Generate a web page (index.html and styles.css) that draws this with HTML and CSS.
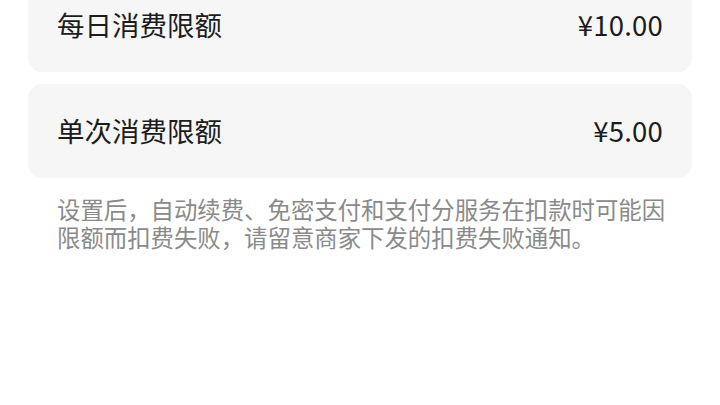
FILE: index.html
```html
<!DOCTYPE html>
<html lang="zh-CN">
<head>
    <meta charset="UTF-8">
    <meta name="viewport" content="width=device-width, initial-scale=1.0">
    <title>消费限额</title>
    <link rel="stylesheet" href="styles.css">
</head>
<body>

    <div class="limit-list">
        <div class="limit-card">
            <span class="limit-label">每日消费限额</span>
            <span class="limit-amount">¥10.00</span>
        </div>
        <div class="limit-card">
            <span class="limit-label">单次消费限额</span>
            <span class="limit-amount">¥5.00</span>
        </div>
        <p class="limit-note">设置后，自动续费、免密支付和支付分服务在扣款时可能因限额而扣费失败，请留意商家下发的扣费失败通知。</p>
    </div>

</body>
</html>
```

FILE: styles.css
```css
body {
    font-family: "Noto Sans CJK SC", "Noto Sans", sans-serif;
    margin: 0;
    padding: 0;
    background-color: #ffffff;
    color: #1c1c1c;
}

.limit-list {
    display: flex;
    flex-direction: column;
    gap: 12px;
    padding: 0 28px;
    margin-top: -22px;
}

.limit-card {
    background-color: #f6f6f6;
    border-radius: 14px;
    height: 94px;
    display: flex;
    justify-content: space-between;
    align-items: center;
    padding: 0 29px;
    font-size: 27.5px;
}

.limit-label {
    margin-top: -3px;
}

.limit-amount {
    margin-top: -3px;
    letter-spacing: 0.2px;
}

.limit-note {
    margin: 5px 0 0;
    padding: 0 18px 0 29px;
    font-size: 23.4px;
    line-height: 28px;
    color: #8a8a8a;
}
```
